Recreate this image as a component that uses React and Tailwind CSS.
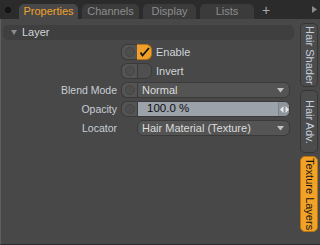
import React from "react";

const topTabs = [
  { label: "Properties", w: "w-[59px]", active: true },
  { label: "Channels", w: "w-[57px]" },
  { label: "Display", w: "w-[53px]" },
  { label: "Lists", w: "w-[54px]" },
];

const sideTabs = [
  { label: "Hair Shader", h: "h-[64px]" },
  { label: "Hair Adv.", h: "h-[63px]" },
  { label: "Texture Layers", h: "h-[76px]", active: true },
];

const Knob = () => (
  <div className="w-[16px] h-full shrink-0 flex items-center justify-center bg-[#545454] border border-[#3a3a3a] border-r-0 rounded-l-[6px]">
    <div className="w-[10px] h-[10px] rounded-full border border-[#444444] bg-[#4e4e4e]" />
  </div>
);

const Arrow = () => (
  <svg width="7" height="5" viewBox="0 0 7 5" className="shrink-0">
    <path d="M0 0 L7 0 L3.5 4.5 Z" fill="#c4c4c4" />
  </svg>
);

const Row = ({ label, children }) => (
  <div className="flex items-center h-[16px]">
    <div className="w-[116px] shrink-0 text-right text-[#c9ced6]">{label}</div>
    <div className="ml-[4px] flex items-center h-full">{children}</div>
  </div>
);

const App = () => {
  return (
    <div className="w-[320px] h-[245px] bg-[#2b2b2b] flex flex-col overflow-hidden text-[10.5px] leading-none font-['Liberation_Sans',Arial,sans-serif]">
      {/* tab strip */}
      <div className="h-[19px] shrink-0 flex items-end">
        <div className="self-center ml-[5px] w-[6px] h-[6px] rounded-full bg-[#151515] border border-[#0c0c0c]" />
        <div className="ml-[8px] flex items-end gap-[4px]">
          {topTabs.map((t) => (
            <div
              key={t.label}
              className={
                t.active
                  ? `${t.w} h-[15px] rounded-t-[5px] bg-[#484848] flex items-center justify-center text-[#f2a22c] text-[11px]`
                  : `${t.w} h-[15px] rounded-t-[5px] bg-[#3b3b3b] flex items-center justify-center text-[#8d8d8d] text-[11px]`
              }
            >
              {t.label}
            </div>
          ))}
        </div>
        <div className="self-center ml-[8px] text-[#a8a8a8] text-[14px]">+</div>
        <svg width="5" height="7" viewBox="0 0 5 7" className="self-center ml-auto mr-[3px]">
          <path d="M0 0 L5 3.5 L0 7 Z" fill="#8a8a8a" />
        </svg>
      </div>

      {/* panel */}
      <div className="flex-1 flex bg-[#484848] border-l border-l-[#5e5e5e] border-b border-b-[#2b2b2b]">
        <div className="flex-1 pt-[6px]">
          <div className="ml-[2px] w-[291px] h-[15px] rounded-[5px] bg-[#3f3f3f] flex items-center">
            <svg width="6" height="5" viewBox="0 0 6 5" className="ml-[8px]">
              <path d="M0 0 L6 0 L3 5 Z" fill="#8c8c8c" />
            </svg>
            <span className="ml-[5px] text-[#d0d4da] text-[11px]">Layer</span>
          </div>

          <div className="mt-[4px] flex flex-col gap-[3px]">
            <Row label="">
              <Knob />
              <div className="w-[15px] h-full bg-[#f0a02a] border border-[#b87414] border-l-0 rounded-r-[6px] flex items-center justify-center">
                <svg width="11" height="10" viewBox="0 0 11 10">
                  <path d="M1.5 5.5 L3.5 8.5 L10 1" stroke="#141414" strokeWidth="1.8" fill="none" />
                </svg>
              </div>
              <span className="ml-[4px] text-[#d0d4da] text-[11px]">Enable</span>
            </Row>
            <Row label="">
              <Knob />
              <div className="w-[15px] h-full bg-[#4f4f4f] border border-[#3a3a3a] rounded-r-[6px]" />
              <span className="ml-[4px] text-[#d0d4da] text-[11px]">Invert</span>
            </Row>
            <Row label="Blend Mode">
              <Knob />
              <div className="w-[153px] h-full bg-[#545454] border border-[#3a3a3a] rounded-r-[6px] flex items-center pl-[4px] pr-[5px]">
                <span className="flex-1 text-[#dcdcdc] text-[11px]">Normal</span>
                <Arrow />
              </div>
            </Row>
            <Row label="Opacity">
              <Knob />
              <div className="w-[153px] h-full bg-[#9ba2aa] border border-[#3a3a3a] rounded-r-[6px] flex items-center">
                <span className="flex-1 pl-[9px] text-[#0e0e0e] text-[11.5px]">100.0 %</span>
                <div className="w-[11px] h-full border-l border-[#7d848c] bg-[#8e959d] rounded-r-[5px] flex items-center justify-center">
                  <svg width="9" height="7" viewBox="0 0 9 7">
                    <path d="M0 3.5 L3.5 0 L3.5 7 Z M9 3.5 L5.5 0 L5.5 7 Z" fill="#e6e8ea" />
                  </svg>
                </div>
              </div>
            </Row>
            <Row label="Locator">
              <div className="w-[16px] shrink-0" />
              <div className="w-[153px] h-full bg-[#545454] border border-[#3a3a3a] rounded-[6px] flex items-center pl-[4px] pr-[5px]">
                <span className="flex-1 text-[#dcdcdc] text-[11px]">Hair Material (Texture)</span>
                <Arrow />
              </div>
            </Row>
          </div>
        </div>

        {/* side tabs */}
        <div className="w-[20px] shrink-0 pt-[4px] flex flex-col gap-[3px]">
          {sideTabs.map((t) => (
            <div
              key={t.label}
              className={
                t.active
                  ? `${t.h} w-[18px] rounded-[5px] bg-[#f2a226] border border-[#b8750f] flex items-center justify-center whitespace-nowrap text-[#151515] text-[11px] [writing-mode:vertical-rl]`
                  : `${t.h} w-[18px] rounded-[5px] bg-[#4c4c4c] border border-[#363636] flex items-center justify-center whitespace-nowrap text-[#c4cedd] text-[11px] [writing-mode:vertical-rl]`
              }
            >
              {t.label}
            </div>
          ))}
        </div>
      </div>
    </div>
  );
};

export default App;
